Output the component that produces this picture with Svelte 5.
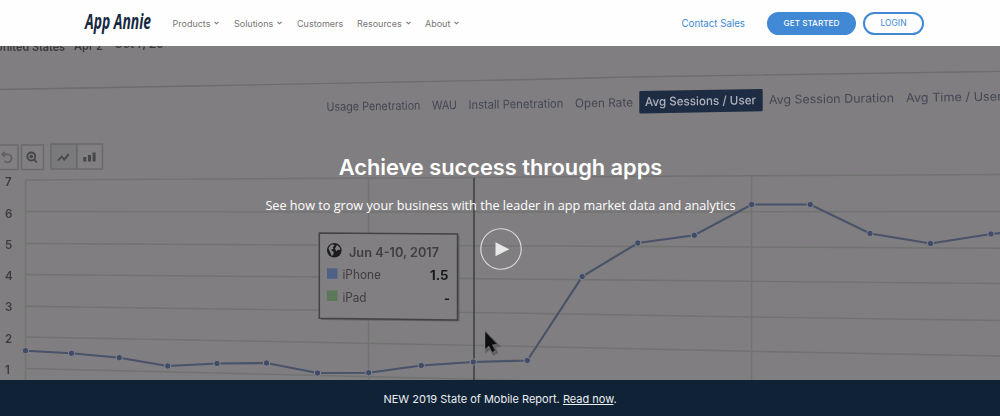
<script lang="ts">
    const navItems = [
        { label: "Products", dropdown: true, width: 61.5 },
        { label: "Solutions", dropdown: true, width: 63 },
        { label: "Customers", dropdown: false, width: 60 },
        { label: "Resources", dropdown: true, width: 68 },
        { label: "About", dropdown: true, width: 40 },
    ];

    // y values of every grid line at x = 25, 300, 540, 750 and 1000
    const gridX = [25, 300, 540, 750, 1000];
    const gridLines = [
        { label: "7", labelY: 186, ys: [180, 178.5, 177, 175.8, 174.5] },
        { label: "6", labelY: 217.5, ys: [211.5, 212, 212, 211.7, 211.5] },
        { label: "5", labelY: 248.5, ys: [243.5, 245, 246, 247, 248.3] },
        { label: "4", labelY: 280, ys: [274.5, 276.8, 279.3, 281.3, 283.5] },
        { label: "3", labelY: 311, ys: [306.3, 310, 313.5, 317, 320.5] },
        { label: "2", labelY: 342.5, ys: [337, 342, 346.7, 351.3, 356] },
        { label: "1", labelY: 373.5, ys: [368.5, 375, 381, 386, 391] },
    ];

    const points = [
        [25.5, 350.7], [71.5, 353.3], [119.3, 357.7], [167.7, 366], [217, 363.5],
        [266.5, 363], [317.5, 373], [368.7, 372.7], [421.3, 365.5], [473.3, 362],
        [527.3, 360.5], [582.2, 276.6], [637.8, 243], [694.3, 235.3], [751.7, 204.5],
        [810.3, 204.5], [870, 233.5], [930.5, 243.5], [991, 234], [1006, 232.5],
    ];

    const tabs = [
        { label: "Usage Penetration", x: 326.5, y: 111, width: 94 },
        { label: "WAU", x: 432, y: 109.5, width: 25 },
        { label: "Install Penetration", x: 468.5, y: 109, width: 95 },
        { label: "Open Rate", x: 575, y: 107.5, width: 58 },
        { label: "Avg Sessions / User", x: 645, y: 106, width: 111, active: true },
        { label: "Avg Session Duration", x: 769, y: 104, width: 125 },
        { label: "Avg Time / User", x: 906, y: 102, width: 96 },
    ];

    /**
     * Turn a list of points into the string that a polyline expects
     */
    function toPolyline(list: number[][]): string {
        return list.map((p) => p.join(",")).join(" ");
    }
</script>

<div class="page">
    <header class="header">
        <svg class="logo" width="70" height="30" viewBox="0 0 70 30" role="img" aria-label="App Annie">
            <text class="logo-text" x="1.500" y="20.500" transform="scale(.63 1)">App Annie</text>
        </svg>
        <nav class="nav">
            {#each navItems as item}
                <a href="#top" class="nav-item" style="width: {item.width}px">
                    <span>{item.label}</span>
                    {#if item.dropdown}
                        <svg class="chevron" width="5" height="4" viewBox="0 0 5 4"><path d="M.5.8 2.5 2.8 4.5.8" /></svg>
                    {/if}
                </a>
            {/each}
        </nav>
        <div class="actions">
            <a href="#top" class="contact">Contact Sales</a>
            <a href="#top" class="button filled">GET STARTED</a>
            <a href="#top" class="button outlined">LOGIN</a>
        </div>
    </header>

    <main class="hero">
        <svg class="backdrop" width="1000" height="334" viewBox="0 46 1000 334" aria-hidden="true">
            <g class="caption">
                <text x="-5" y="50.500" textLength="70" lengthAdjust="spacingAndGlyphs">United States</text>
                <text x="74" y="49.500" textLength="29" lengthAdjust="spacingAndGlyphs">Apr 2</text>
                <text x="114" y="48" textLength="50">Oct 7, 20</text>
            </g>
            <polyline class="rule" points="0,89.5 250,85 530,79.5 630,77 1000,71.3" />

            {#each tabs as tab}
                {#if tab.active}
                    <path class="tab-active" d="M640 91 761.500 89q1.200 0 1.200 1.200V110q0 1.300-1.200 1.300L641 113.600q-1.700 0-1.700-1.500V92.300q0-1.300 1-1.300Z" />
                {/if}
                <text
                    class="tab"
                    class:active={tab.active}
                    x={tab.x}
                    y={tab.y}
                    textLength={tab.width}
                    lengthAdjust="spacingAndGlyphs"
                    transform="rotate(-.9 {tab.x} {tab.y})">{tab.label}</text>
            {/each}

            <!-- chart toolbar -->
            <g class="tool">
                <rect x="-8" y="145" width="26" height="24.500" />
                <rect x="21.500" y="145" width="22" height="24.500" />
                <rect class="pressed" x="51" y="144" width="26" height="25" />
                <rect x="77" y="144" width="25.500" height="25" />
            </g>
            <g class="tool-icon">
                <path class="faded" d="M2.500 154.300h5a4 4 0 1 1-3 6.500M4.800 151.800l-2.500 2.500 2.500 2.500" />
                <circle cx="31.300" cy="156.500" r="4" />
                <path d="M34.300 159.500l2.500 3M29.500 156.500h3.600M31.300 154.700v3.600" />
                <path d="M58 160.500l3.700-4 2.500 3 4.500-5.300" />
                <path class="bars" d="M84.800 161.500v-4.500M89.500 161.500v-6.500M94.100 161.500v-9" />
            </g>

            <g class="grid">
                {#each gridLines as line}
                    <polyline points={toPolyline(line.ys.map((y, i) => [gridX[i], y]))} />
                    <text x="5" y={line.labelY}>{line.label}</text>
                {/each}
                <path d="M25.500 180V380M368.500 178V380M751.500 176V380" />
            </g>
            <path class="cursor-line" d="M474 178V380" />

            <polyline class="series" points={toPolyline(points)} />
            {#each points as [x, y]}
                <circle class="point" cx={x} cy={y} r="3.200" />
            {/each}

            <g class="tooltip">
                <path class="tooltip-shadow" d="M321 234.500 459.500 235.500 459.500 321.500 321 320Z" />
                <path class="tooltip-box" d="M319.300 233 457.500 234 457.500 320 319.300 318.300Z" />
                <circle cx="334.300" cy="250.300" r="7.300" class="globe" />
                <path class="land" d="M328.500 248.500q1-3.500 4.500-4.200l1.500 1.500-1.800 1.500.8 1.500-2.500 1.300 2.800 1.800-.5 2.700-1.500 1.400-1.400-3.300Zm8.500-3.500 2.800 2.500.4 2.500-2.300-.3-1.700 1.500-1.200-2.700Z" />
                <text class="date" x="349" y="256.800" textLength="90" lengthAdjust="spacingAndGlyphs">Jun 4-10, 2017</text>
                <rect x="327" y="268.300" width="10.500" height="10.500" fill="#4e6287" />
                <text x="342.500" y="279.300" textLength="38.500" lengthAdjust="spacingAndGlyphs">iPhone</text>
                <text class="value" x="430" y="280" textLength="18.500" lengthAdjust="spacingAndGlyphs">1.5</text>
                <rect x="327" y="290.500" width="10.500" height="10.500" fill="#5b7958" />
                <text x="342.500" y="301.500" textLength="24" lengthAdjust="spacingAndGlyphs">iPad</text>
                <text class="value" x="444" y="303">-</text>
            </g>

            <path class="pointer-shadow" d="M486.500 333.500v17.500l3.700-3 3.500 6 3-1.500-3-5.700 4.800-.8Z" />
            <path class="pointer" d="M485.300 332v16.800l3.700-3 3.300 6.200 2.700-1.400-3-5.900 4.800-.8Z" />
        </svg>

        <div class="hero-content">
            <h1 class="title">Achieve success through apps</h1>
            <p class="subtitle">See how to grow your business with the leader in app market data and analytics</p>
            <button class="play" aria-label="Play video">
                <svg width="42" height="42" viewBox="0 0 42 42">
                    <circle cx="21" cy="21" r="20.200" />
                    <path d="M15.500 14.200v14L29.300 21.200Z" />
                </svg>
            </button>
        </div>
    </main>

    <footer class="banner">
        <span>NEW 2019 State of Mobile Report. <a href="#top">Read now</a>.</span>
    </footer>
</div>

<style>
    :global(body) {
        margin: 0;
        background: #fff;
    }

    .page {
        width: 1000px;
        height: 416px;
        display: flex;
        flex-direction: column;
        overflow: hidden;
        font-family: Inter, "Open Sans", sans-serif;
    }

    a {
        color: inherit;
        text-decoration: none;
    }

    .header {
        height: 46px;
        flex: none;
        box-sizing: border-box;
        padding: 0 76px 0 84px;
        display: flex;
        align-items: center;
        background: #fefefe;
    }

    .logo {
        flex: none;
        overflow: visible;
    }

    .logo-text {
        font: italic 700 22px "Open Sans", sans-serif;
        fill: #14283f;
    }

    .nav {
        display: flex;
        margin-left: 18.5px;
        font-size: 9px;
        color: #777;
    }

    .nav-item {
        display: flex;
        align-items: center;
        white-space: nowrap;
    }

    .chevron {
        margin-left: 4px;
        fill: none;
        stroke: #777;
        stroke-width: 1.1;
    }

    .actions {
        display: flex;
        align-items: center;
        margin-left: auto;
        color: #4189d0;
    }

    .contact {
        margin-right: 22px;
        font-size: 9.7px;
        white-space: nowrap;
    }

    .button {
        height: 23px;
        box-sizing: border-box;
        display: flex;
        align-items: center;
        justify-content: center;
        border: 2px solid #4189d5;
        border-radius: 12px;
        font-size: 8.5px;
        white-space: nowrap;
    }

    .filled {
        width: 89px;
        margin-right: 7px;
        background: #4189d5;
        color: #fff;
        font-size: 8.2px;
        font-weight: 500;
    }

    .outlined {
        width: 61px;
    }

    .hero {
        position: relative;
        height: 334px;
        flex: none;
        background: #807e80;
        overflow: hidden;
    }

    /* out-of-focus photo behind the headline */
    .backdrop {
        position: absolute;
        inset: 0;
        font-family: Inter, sans-serif;
        filter: blur(.4px);
    }

    .caption {
        font-size: 12px;
        font-weight: 600;
        fill: #3c3c40;
    }

    .rule {
        fill: none;
        stroke: #6c6d6d;
        stroke-width: 1.3;
    }

    .tab {
        font-size: 12px;
        fill: #444754;
    }

    .tab.active {
        fill: #b0b3bd;
        font-weight: 500;
    }

    .tab-active {
        fill: #1d2c42;
    }

    .tool rect {
        fill: #817f81;
        stroke: #69686a;
        stroke-width: 1.4;
    }

    .tool .pressed {
        fill: #7a797b;
    }

    .tool-icon {
        fill: none;
        stroke: #464649;
        stroke-width: 1.8;
    }

    .tool-icon .faded {
        stroke: #616163;
    }

    .tool-icon .bars {
        stroke-width: 3;
    }

    .grid {
        fill: none;
        stroke: #717371;
        stroke-width: 1.4;
    }

    .grid text {
        font: 600 11.5px Inter, sans-serif;
        fill: #3c3c40;
        stroke: none;
    }

    .cursor-line {
        stroke: #444545;
        stroke-width: 1.7;
    }

    .series {
        fill: none;
        stroke: #485269;
        stroke-width: 2.1;
    }

    .point {
        fill: #414b66;
        stroke: #858690;
        stroke-width: 1;
    }

    .tooltip {
        font-size: 12.5px;
        fill: #3e3e41;
    }

    .tooltip-shadow {
        fill: #646365;
    }

    .tooltip-box {
        fill: #817f81;
        stroke: #434345;
        stroke-width: 1.5;
    }

    .date {
        font-weight: 600;
    }

    .value {
        font-weight: 700;
        fill: #19191c;
    }

    .globe {
        fill: #1c1c1f;
    }

    .land {
        fill: #828083;
    }

    .pointer {
        fill: #0e0e10;
    }

    .pointer-shadow {
        fill: none;
        stroke: #616064;
        stroke-width: 2.5;
    }

    .hero-content {
        position: relative;
        display: flex;
        flex-direction: column;
        align-items: center;
        padding: 106px 0 0 1px;
        color: #fff;
    }

    .title {
        margin: 0;
        font-size: 21.8px;
        font-weight: 600;
        line-height: 30px;
        white-space: nowrap;
    }

    .subtitle {
        margin: 14px 0 0;
        font: 400 12.66px/18px "Open Sans", sans-serif;
        white-space: nowrap;
    }

    .play {
        width: 42px;
        height: 42px;
        margin: 14px 0 0;
        padding: 0;
        border: 0;
        background: none;
    }

    .play svg {
        display: block;
    }

    .play circle {
        fill: none;
        stroke: #deddde;
        stroke-width: 1.1;
    }

    .play path {
        fill: #e9e8e9;
    }

    .banner {
        height: 36px;
        display: flex;
        align-items: center;
        justify-content: center;
        padding-top: 1px;
        box-sizing: border-box;
        background: #102236;
        color: #eceff2;
        font-size: 11px;
    }

    .banner a {
        text-decoration: underline;
    }
</style>
